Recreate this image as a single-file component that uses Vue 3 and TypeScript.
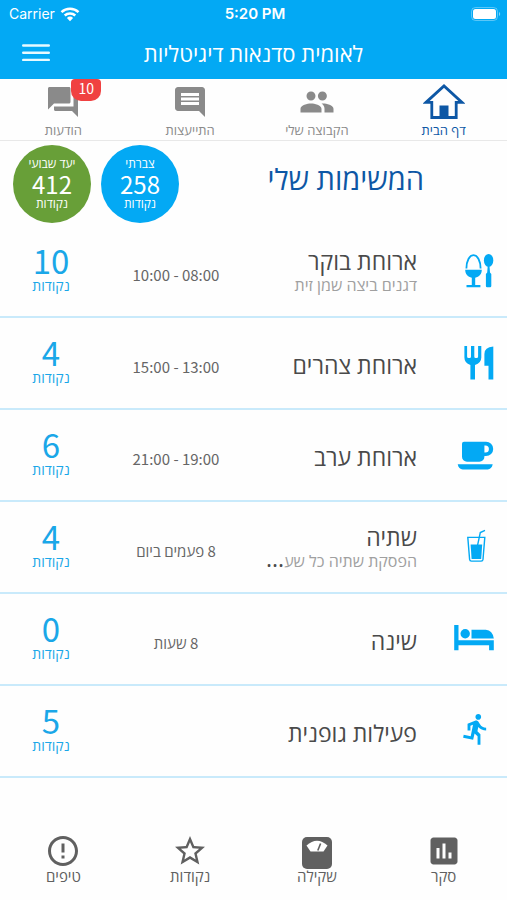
<script setup lang="ts">
type TaskIcon = 'egg' | 'cutlery' | 'cup' | 'glass' | 'bed' | 'run'

interface Task {
  icon: TaskIcon
  title: string
  detail?: string
  clipped?: boolean
  when: string
  points: number
}

interface Tab {
  label: string
  path: string
  badge?: number
}

const tasks: Task[] = [
  { icon: 'egg', title: 'ארוחת בוקר', detail: 'דגנים ביצה שמן זית', when: '08:00 - 10:00', points: 10 },
  { icon: 'cutlery', title: 'ארוחת צהרים', when: '13:00 - 15:00', points: 4 },
  { icon: 'cup', title: 'ארוחת ערב', when: '19:00 - 21:00', points: 6 },
  { icon: 'glass', title: 'שתיה', detail: 'הפסקת שתיה כל שע', clipped: true, when: '8 פעמים ביום', points: 4 },
  { icon: 'bed', title: 'שינה', when: '8 שעות', points: 0 },
  { icon: 'run', title: 'פעילות גופנית', when: '', points: 5 },
]

const tabs: Tab[] = [
  {
    label: 'הקבוצה שלי',
    path: 'M15.600 11c1.660 0 2.990-1.340 2.990-3S17.260 5 15.600 5c-1.660 0-3 1.340-3 3s1.340 3 3 3zm-7.600 0c1.660 0 2.990-1.340 2.990-3S9.660 5 8 5C6.340 5 5 6.340 5 8s1.340 3 3 3zm0 2c-2.330 0-7 1.170-7 3.500V19h14v-2.500c0-2.330-4.670-3.500-7-3.500zm8 0c-.290 0-.620.020-.970.050 1.160.840 1.970 1.970 1.970 3.450V19h6v-2.500c0-2.330-4.670-3.500-7-3.500z',
  },
  {
    label: 'התייעצות',
    path: 'M21.99 4c0-1.1-.89-2-1.99-2H4c-1.1 0-2 .9-2 2v12c0 1.1.9 2 2 2h14l4 4-.01-18zM18 14H6v-2h12v2zm0-3H6V9h12v2zm0-3H6V6h12v2z',
  },
  {
    label: 'הודעות',
    path: 'M21 6h-2v9H6v2c0 .55.45 1 1 1h11l4 4V7c0-.55-.45-1-1-1zm-4 6V3c0-.55-.45-1-1-1H3c-.55 0-1 .45-1 1v14l4-4h10c.55 0 1-.45 1-1z',
    badge: 10,
  },
]
</script>

<template>
  <div class="app" dir="rtl" lang="he">
    <header class="top">
      <div class="status" dir="ltr">
        <span class="carrier">
          Carrier
          <svg width="20" height="16" viewBox="0 0 20 16" aria-hidden="true">
            <g fill="none" stroke="#fff" stroke-width="2.5">
              <path d="M1.5 6.2a12.3 12.3 0 0 1 17 0" />
              <path d="M4.7 9.5a7.7 7.7 0 0 1 10.6 0" />
            </g>
            <path d="M10 15.2l-3.1-3.3a4.4 4.4 0 0 1 6.2 0z" fill="#fff" />
          </svg>
        </span>
        <span class="clock">5:20 PM</span>
        <span class="battery">
          <svg width="30" height="14" viewBox="0 0 30 14" aria-hidden="true">
            <rect x="0.5" y="0.5" width="26" height="13" rx="4" fill="none" stroke="#fff" stroke-opacity=".35" />
            <rect x="2" y="2" width="23" height="10" rx="2.5" fill="#fff" />
            <path d="M28 5c1.6.6 1.6 3.4 0 4z" fill="#fff" fill-opacity=".5" />
          </svg>
        </span>
      </div>
      <div class="bar">
        <h1>לאומית סדנאות דיגיטליות</h1>
        <button class="menu" type="button" aria-label="תפריט">
          <svg width="28" height="18" viewBox="0 0 28 18" aria-hidden="true">
            <path d="M1.2 1.5h25.6M1.2 8.7h25.6M1.2 15.9h25.6" stroke="#e6faff" stroke-width="2.4" stroke-linecap="round" />
          </svg>
        </button>
      </div>
    </header>

    <nav class="tabs">
      <a class="tab active" href="#" aria-current="page">
        <svg width="42" height="36" viewBox="0 0 42 36" aria-hidden="true">
          <path d="M3 18.4L21 2l18 16.4h-5.8v15.1H8.800V18.4z" fill="none" stroke="currentColor" stroke-width="2.8" />
          <path d="M16.5 21.5h9V33h-9z" fill="currentColor" />
        </svg>
        <span>דף הבית</span>
      </a>
      <a v-for="tab in tabs" :key="tab.label" class="tab" href="#">
        <span class="glyph">
          <svg width="36" height="36" viewBox="0 0 24 24" aria-hidden="true">
            <path :d="tab.path" fill="currentColor" />
          </svg>
          <span v-if="tab.badge" class="badge">{{ tab.badge }}</span>
        </span>
        <span>{{ tab.label }}</span>
      </a>
    </nav>

    <main>
      <section class="summary">
        <h2>המשימות שלי</h2>
        <div class="score earned">
          <span>צברתי</span>
          <strong>258</strong>
          <span>נקודות</span>
        </div>
        <div class="score goal">
          <span>יעד שבועי</span>
          <strong>412</strong>
          <span>נקודות</span>
        </div>
      </section>

      <ul class="tasks">
        <li v-for="task in tasks" :key="task.title" class="task">
          <svg class="task-icon" width="40" height="34" viewBox="0 0 40 34" fill="currentColor" aria-hidden="true">
            <template v-if="task.icon === 'egg'">
              <path d="M12.4 14.5C12.4 7 15.5 1.2 19.5 1.2S26.6 7 26.6 14.5" fill="none" stroke="currentColor" stroke-width="1.8" />
              <path d="M11.2 15.8h16.6c0 4.2-2.7 7.2-6.6 8V31h5.2v2.2H12.5V31h5.3v-7.2c-3.9-.8-6.6-3.8-6.6-8z" />
              <ellipse cx="34.6" cy="6.4" rx="4.7" ry="6.4" />
              <path d="M33.7 12h1.8l.5 6.5 1.3 1.5v12q0 1.2-1.2 1.2h-3q-1.2 0-1.2-1.2V20l1.3-1.5z" />
            </template>
            <template v-else-if="task.icon === 'cutlery'">
              <path d="M10.4 0h2.7v10.5q0 1.5 1.5 1.500h1.1q1.3 0 1.3-1.5V0h3.3v10.5q0 1.5 1.3 1.5h1q1.5 0 1.5-1.5V0h3.2v11.5q0 5.5-6.3 7.5v14.5h-4.6V19q-6-2-6-7.5z" />
              <path d="M39.3.5v33h-4.8V19.8h-4.1V8q0-7 8.9-7.5z" />
            </template>
            <template v-else-if="task.icon === 'cup'">
              <path fill-rule="evenodd" d="M10 3.7h22a7.2 7.2 0 0 1 0 14.4h-1.6v.6a5 5 0 0 1-5 5H13a5 5 0 0 1-5-5v-13q0-2 2-2zM30.4 7.4v7h1a3.5 3.5 0 0 0 0-7z" />
              <path d="M3.7 26.2h35c-.6 3.3-2.5 5.2-5 5.2h-25c-2.5 0-4.400-1.9-5-5.2z" />
            </template>
            <template v-else-if="task.icon === 'glass'">
              <path d="M13.8 7.4h17l-1.8 22q-.2 1.7-1.8 1.7h-9.8q-1.6 0-1.8-1.7z" fill="none" stroke="currentColor" stroke-width="1.4" />
              <path d="M16.600 14.500h11.600l-1 14.500h-9.600z" />
              <path d="M31 .4l-4.700 2.200-2.700 12.500" fill="none" stroke="currentColor" stroke-width="1.4" />
            </template>
            <template v-else-if="task.icon === 'bed'">
              <path d="M.2 3h4.3v15.3h35.3v9.900h-4.700v-5H4.500v5H.2z" />
              <circle cx="11.2" cy="11.8" r="4.7" />
              <path d="M17.500 7.700h14.300q6.800.4 8 8.800H17.500z" />
            </template>
            <path
              v-else
              transform="translate(5 -2) scale(1.43)"
              d="M13.49 5.48c1.1 0 2-.9 2-2s-.9-2-2-2-2 .9-2 2 .9 2 2 2zm-3.6 13.9l1-4.4 2.1 2v6h2v-7.5l-2.1-2 .6-3c1.3 1.5 3.3 2.5 5.5 2.5v-2c-1.9 0-3.5-1-4.3-2.4l-1-1.6c-.4-.6-1-1-1.7-1-.3 0-.5.1-.8.1l-5.2 2.2v4.7h2v-3.4l1.8-.7-1.6 8.1-4.9-1-.4 2 7 1.4z"
            />
          </svg>
          <div class="what">
            <h3>{{ task.title }}</h3>
            <p v-if="task.detail"><span>{{ task.detail }}</span>{{ task.clipped ? '...' : '' }}</p>
          </div>
          <div class="when">{{ task.when }}</div>
          <div class="points">
            <strong>{{ task.points }}</strong>
            <span>נקודות</span>
          </div>
        </li>
      </ul>
    </main>

    <nav class="tools">
      <a href="#">
        <svg width="36" height="36" viewBox="0 0 24 24" aria-hidden="true">
          <path d="M19 3H5c-1.1 0-2 .9-2 2v14c0 1.1.9 2 2 2h14c1.1 0 2-.9 2-2V5c0-1.1-.9-2-2-2zM9 17H7v-7h2v7zm4 0h-2V7h2v10zm4 0h-2v-4h2v4z" fill="currentColor" />
        </svg>
        <span>סקר</span>
      </a>
      <a href="#">
        <svg width="36" height="36" viewBox="0 0 36 36" aria-hidden="true">
          <rect x="3" y="4" width="30" height="32" rx="5" fill="currentColor" />
          <path d="M7.5 12.5Q18 3 28.500 12.500L24.500 18.500h-13z" fill="#fff" />
          <path d="M18.800 17.500l2.800-7" stroke="currentColor" stroke-width="1.6" />
        </svg>
        <span>שקילה</span>
      </a>
      <a href="#">
        <svg width="36" height="36" viewBox="0 0 24 24" aria-hidden="true">
          <path d="M22 9.24l-7.19-.62L12 2 9.19 8.63 2 9.24l5.46 4.73L5.82 21 12 17.27 18.18 21l-1.63-7.03L22 9.24zM12 15.4l-3.76 2.27 1-4.28-3.32-2.88 4.38-.38L12 6.1l1.71 4.04 4.38.38-3.32 2.88 1 4.28L12 15.4z" fill="currentColor" />
        </svg>
        <span>נקודות</span>
      </a>
      <a href="#">
        <svg width="36" height="36" viewBox="0 0 24 24" aria-hidden="true">
          <path d="M11 15h2v2h-2zm0-8h2v6h-2zm.99-5C6.47 2 2 6.48 2 12s4.47 10 9.99 10C17.52 22 22 17.52 22 12S17.52 2 11.99 2zM12 20c-4.42 0-8-3.58-8-8s3.58-8 8-8 8 3.58 8 8-3.58 8-8 8z" fill="currentColor" />
        </svg>
        <span>טיפים</span>
      </a>
    </nav>
  </div>
</template>

<style>
body {
  margin: 0;
  background: #fefefe;
}
</style>

<style scoped>
.app {
  display: flex;
  flex-direction: column;
  min-height: 100vh;
  background: #fefefe;
  color: #4a4a4a;
  font-family: "Open Sans", "Noto Sans", sans-serif;
}

h1, h2, h3, p, ul {
  margin: 0;
  padding: 0;
  font-weight: 400;
}

a {
  color: inherit;
  text-decoration: none;
}

.top {
  background: #03a9f4;
  color: #fff;
}

.status {
  display: grid;
  grid-template-columns: 1fr auto 1fr;
  align-items: center;
  height: 27px;
  padding: 0 6px 0 9px;
  font-family: Inter, "Liberation Sans", sans-serif;
  font-size: 14px;
}

.carrier {
  display: flex;
  align-items: center;
  gap: 5px;
}

.clock {
  font-size: 15px;
  font-weight: 600;
}

.battery {
  display: flex;
  justify-content: flex-end;
}

.bar {
  display: grid;
  grid-template-columns: 72px 1fr 72px;
  align-items: center;
  height: 52px;
}

.bar h1 {
  grid-column: 2;
  font-size: 22px;
  line-height: 28px;
  text-align: center;
}

.menu {
  display: flex;
  justify-content: center;
  padding: 8px;
  border: 0;
  background: none;
}

.tabs, .tools {
  display: grid;
  grid-template-columns: repeat(4, 1fr);
  text-align: center;
}

.tabs {
  padding-top: 5px;
  border-bottom: 1px solid #e8e8e8;
  color: #8a8a8a;
  font-size: 13px;
  line-height: 20px;
}

.tab, .tools a {
  display: flex;
  flex-direction: column;
  align-items: center;
}

.active {
  color: #0d57a5;
}

.glyph {
  position: relative;
  height: 36px;
}

.badge {
  position: absolute;
  top: -5px;
  left: 26px;
  width: 30px;
  height: 22px;
  border-radius: 4px 4px 10px 10px;
  background: #f04141;
  color: #fff;
  font-family: "Noto Sans CJK SC", sans-serif;
  font-size: 14px;
  line-height: 18px;
}

.summary {
  display: flex;
  align-items: center;
  gap: 10px;
  padding: 4px 83px 3px 13px;
}

.summary h2 {
  flex: 1;
  padding-bottom: 10px;
  color: #0d57a5;
  font-size: 29px;
  line-height: 36px;
}

.score {
  display: flex;
  flex-direction: column;
  align-items: center;
  justify-content: center;
  width: 78px;
  height: 78px;
  border-radius: 50%;
  color: #fff;
  font-size: 12px;
  line-height: 16px;
}

.score strong {
  font-family: "Noto Sans CJK SC", sans-serif;
  font-size: 24px;
  font-weight: 400;
  line-height: 24px;
}

.earned {
  background: #03a9f4;
}

.goal {
  background: #689f38;
}

.tasks {
  list-style: none;
}

.task {
  display: grid;
  grid-template-columns: 40px minmax(0, 1fr) 148px 102px;
  align-items: center;
  box-sizing: border-box;
  height: 92px;
  padding-right: 13px;
  border-bottom: 2px solid #c9eafb;
}

.task-icon {
  color: #03a9f4;
  overflow: visible;
}

.what {
  padding: 3px 37px 0 0;
  white-space: nowrap;
}

.what h3 {
  font-size: 23px;
  line-height: 22px;
}

.what p {
  font-size: 23px;
  line-height: 20px;
}

.what p span {
  color: #a0a0a0;
  font-size: 16px;
}

.when {
  padding-top: 7px;
  color: #666;
  font-family: "Noto Sans CJK SC", "Open Sans", sans-serif;
  font-size: 15px;
  line-height: 20px;
  text-align: center;
}

.points {
  display: flex;
  flex-direction: column;
  align-items: center;
  padding-bottom: 5px;
  color: #1aa7e8;
  font-size: 14px;
  line-height: 18px;
}

.points strong {
  font-family: "Noto Sans CJK SC", sans-serif;
  font-size: 33px;
  font-weight: 400;
  line-height: 34px;
}

.tools {
  margin-top: auto;
  padding-bottom: 16px;
  color: #606060;
  font-size: 15px;
  line-height: 15px;
}
</style>
